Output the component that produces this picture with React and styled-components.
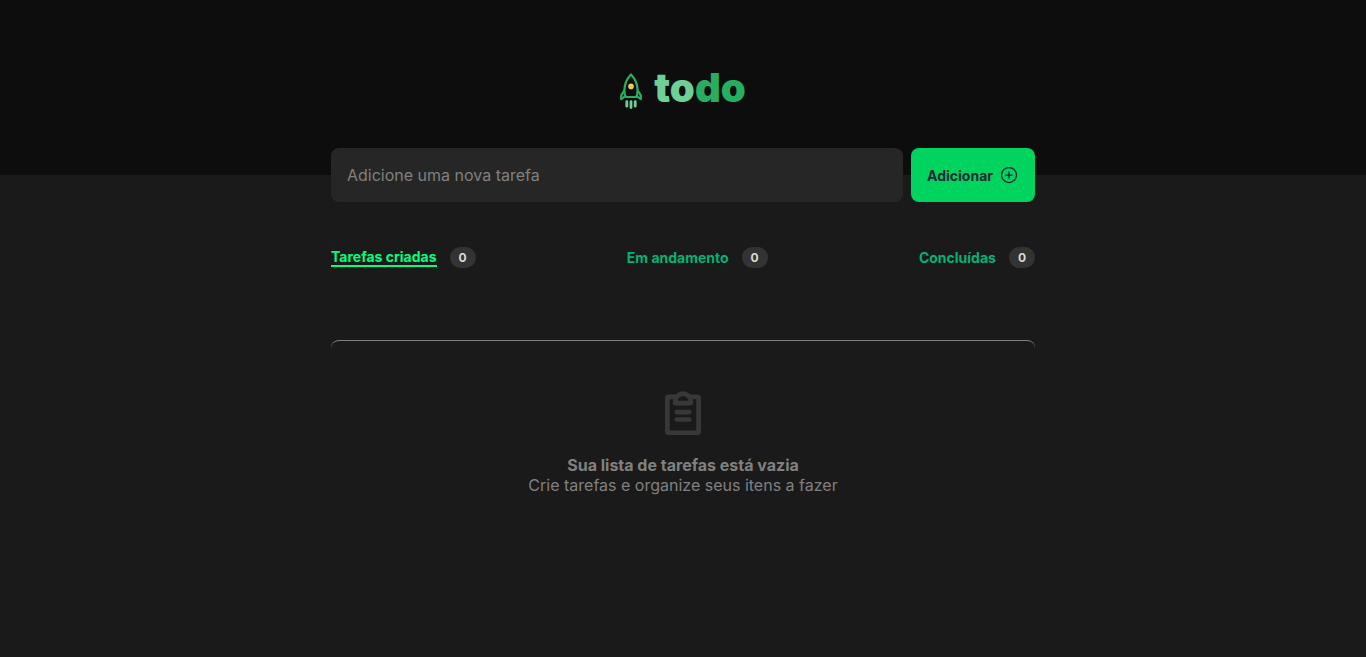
import React, { useState } from 'react';
import styled, { createGlobalStyle } from 'styled-components';
import { PiPlusCircle } from 'react-icons/pi';

const GlobalStyle = createGlobalStyle`
  * {
    box-sizing: border-box;
    margin: 0;
    padding: 0;
  }

  body {
    background: #1a1a1a;
    color: #808080;
  }

  body, input, button {
    font-family: Inter, "Liberation Sans", sans-serif;
    font-size: 16px;
  }
`;

const Header = styled.header`
  display: flex;
  justify-content: center;
  padding: 64px 16px 63px;
  background: #0d0d0d;
`;

const Logo = styled.h1`
  display: flex;
  align-items: center;
  gap: 12px;
  font-size: 40px;
  font-weight: 900;
  line-height: 48px;
  color: #27ae60;
`;

const RocketIcon = styled.svg`
  margin-top: 6px;
`;

const LogoStart = styled.span`
  color: #6fcf97;
`;

const Main = styled.main`
  max-width: 736px;
  margin: -27px auto 0;
  padding: 0 16px;
`;

const TaskForm = styled.form`
  display: flex;
  gap: 8px;
`;

const TaskInput = styled.input`
  flex: 1;
  min-width: 0;
  height: 54px;
  padding: 0 16px;
  border: 0;
  border-radius: 8px;
  background: #262626;
  color: #f2f2f2;

  &::placeholder {
    color: #808080;
  }
`;

const AddButton = styled.button`
  display: flex;
  align-items: center;
  gap: 6px;
  height: 54px;
  padding: 0 16px;
  border: 0;
  border-radius: 8px;
  background: #00d45e;
  color: #222938;
  font-size: 14px;
  font-weight: 700;
  cursor: pointer;
`;

const Filters = styled.nav`
  display: flex;
  justify-content: space-between;
  margin-top: 45px;
`;

const Filter = styled.div`
  display: flex;
  align-items: center;
  gap: 13px;
`;

const FilterButton = styled.button`
  border: 0;
  border-bottom: ${({ $active }) => ($active ? '2px solid #00ff7f' : '0')};
  background: none;
  color: ${({ $active }) => ($active ? '#00ff7f' : '#04b173')};
  font-size: 14px;
  font-weight: 700;
  line-height: 17px;
  cursor: pointer;
`;

const Count = styled.span`
  padding: 2px 9px;
  border-radius: 999px;
  background: #333333;
  color: #d9d9d9;
  font-size: 12px;
  font-weight: 700;
  line-height: 17px;
`;

const EmptyList = styled.section`
  display: flex;
  flex-direction: column;
  align-items: center;
  margin-top: 72px;
  padding: 48px 16px;
  border-top: 1px solid #808080;
  border-radius: 8px;
  line-height: 20px;
  text-align: center;
`;

const ClipboardIcon = styled.svg`
  margin-bottom: 16px;
  color: #383838;
`;

function Rocket() {
  return (
    <RocketIcon width="22" height="36" viewBox="0 0 22 36" fill="none" aria-hidden="true">
      <path
        d="M11 1.4C7.2 5.4 4.4 10.6 4.4 17.4C4.4 19.6 4.8 21.8 5.8 24H16.2C17.2 21.8 17.6 19.6 17.6 17.4C17.6 10.6 14.8 5.4 11 1.4Z"
        stroke="#27ae60"
        strokeWidth="2.2"
        strokeLinejoin="round"
      />
      <path
        d="M4.4 17.4L1.2 22.4V26.2L5.4 23.2M17.6 17.4L20.8 22.4V26.2L16.6 23.2"
        stroke="#27ae60"
        strokeWidth="2.2"
        strokeLinejoin="round"
      />
      <circle cx="11" cy="13.4" r="2.8" fill="#f2c94c" />
      <path
        d="M6.8 28.6V33.2M11 28.6V34.6M15.2 28.6V33.2"
        stroke="#6fcf97"
        strokeWidth="2.8"
        strokeLinecap="round"
      />
    </RocketIcon>
  );
}

function Clipboard() {
  return (
    <ClipboardIcon
      width="50"
      height="50"
      viewBox="0 0 256 256"
      fill="none"
      stroke="currentColor"
      strokeWidth="24"
      strokeLinecap="round"
      strokeLinejoin="round"
      aria-hidden="true"
    >
      <path d="M96 118H160M96 156H160" />
      <path d="M163.8 40H200a8 8 0 0 1 8 8V216a8 8 0 0 1-8 8H56a8 8 0 0 1-8-8V48a8 8 0 0 1 8-8H92.2" />
      <path d="M88 72V64a40 40 0 0 1 80 0v8Z" />
    </ClipboardIcon>
  );
}

const filters = ['Tarefas criadas', 'Em andamento', 'Concluídas'];

export default function App() {
  const [active, setActive] = useState(filters[0]);

  return (
    <>
      <GlobalStyle />
      <Header>
        <Logo>
          <Rocket />
          <span>
            <LogoStart>to</LogoStart>do
          </span>
        </Logo>
      </Header>
      <Main>
        <TaskForm onSubmit={(event) => event.preventDefault()}>
          <TaskInput
            type="text"
            aria-label="Adicione uma nova tarefa"
            placeholder="Adicione uma nova tarefa"
          />
          <AddButton type="submit">
            Adicionar
            <PiPlusCircle size={20} />
          </AddButton>
        </TaskForm>
        <Filters>
          {filters.map((name) => (
            <Filter key={name}>
              <FilterButton
                type="button"
                $active={name === active}
                onClick={() => setActive(name)}
              >
                {name}
              </FilterButton>
              <Count>0</Count>
            </Filter>
          ))}
        </Filters>
        <EmptyList>
          <Clipboard />
          <strong>Sua lista de tarefas está vazia</strong>
          <p>Crie tarefas e organize seus itens a fazer</p>
        </EmptyList>
      </Main>
    </>
  );
}
